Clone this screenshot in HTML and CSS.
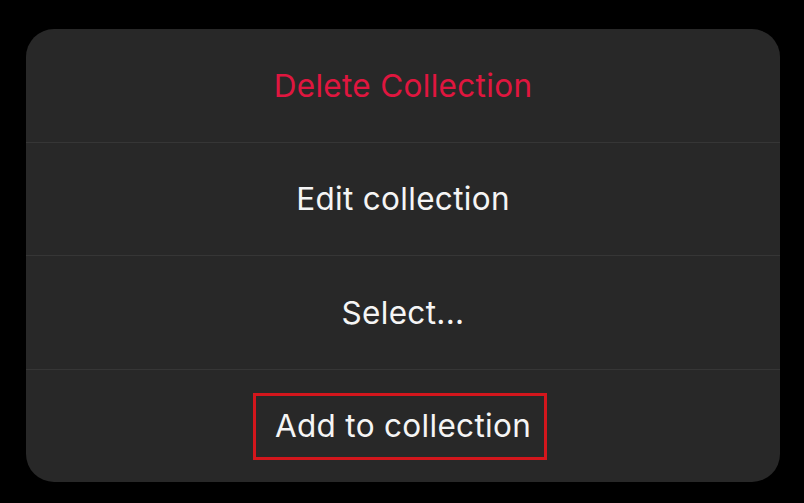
FILE: index.html
```html
<!DOCTYPE html>
<html lang="en">
<head>
	<meta charset="utf-8" />
	<title>Collection actions</title>
	<link rel="stylesheet" href="styles.css">
</head>
<body>
	<div class="sheet">
		<div class="action destructive">Delete Collection</div>
		<div class="action">Edit collection</div>
		<div class="action">Select...</div>
		<div class="action marked">
			<span class="mark"></span>
			Add to collection
		</div>
	</div>
</body>
</html>
```

FILE: styles.css
```css
*{
	box-sizing:border-box;
}

html, body{
	margin:0;
	height:100%;
	background-color:#000;
}

body{
	padding:29px 24px 21px 26px;
	font-family:Inter, "Noto Sans", sans-serif;
}

.sheet{
	background-color:#282828;
	border-radius:28px;
	height:453px;
	display:flex;
	flex-direction:column;
	overflow:hidden;
}

.action{
	flex:1;
	display:flex;
	align-items:center;
	justify-content:center;
	color:#f5f5f5;
	font-size:31.5px;
	letter-spacing:0.01em;
	border-top:1px solid #363636;
	position:relative;
}

.action:first-child{
	border-top:none;
}

.destructive{
	color:#e0163f;
}

/* red outline drawn over the last row */
.mark{
	position:absolute;
	left:227px;
	top:23px;
	width:294px;
	height:67px;
	border:3px solid #d3161c;
}
```
